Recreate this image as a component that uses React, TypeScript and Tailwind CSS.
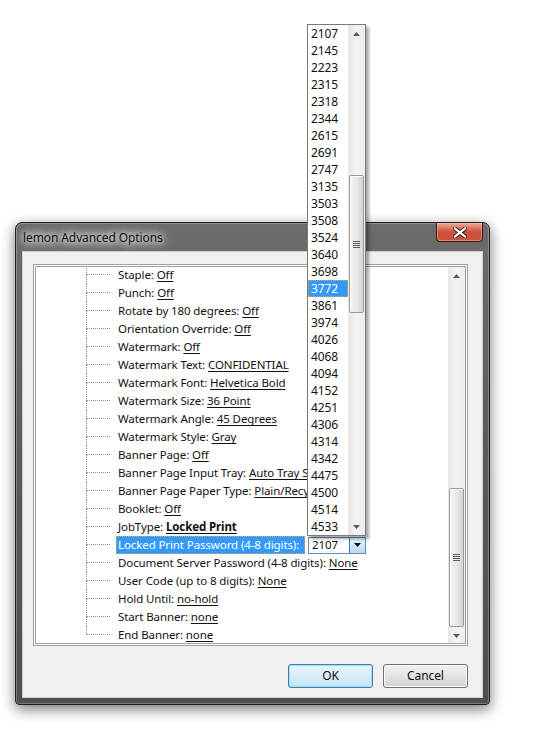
import React from "react";

type Row = { label: string; value?: string; bold?: boolean; combo?: boolean };

const ROWS: Row[] = [
  { label: "Staple", value: "Off" },
  { label: "Punch", value: "Off" },
  { label: "Rotate by 180 degrees", value: "Off" },
  { label: "Orientation Override", value: "Off" },
  { label: "Watermark", value: "Off" },
  { label: "Watermark Text", value: "CONFIDENTIAL" },
  { label: "Watermark Font", value: "Helvetica Bold" },
  { label: "Watermark Size", value: "36 Point" },
  { label: "Watermark Angle", value: "45 Degrees" },
  { label: "Watermark Style", value: "Gray" },
  { label: "Banner Page", value: "Off" },
  { label: "Banner Page Input Tray", value: "Auto Tray Select" },
  { label: "Banner Page Paper Type", value: "Plain/Recycled" },
  { label: "Booklet", value: "Off" },
  { label: "JobType", value: "Locked Print", bold: true },
  { label: "Locked Print Password (4-8 digits)", combo: true },
  { label: "Document Server Password (4-8 digits)", value: "None" },
  { label: "User Code (up to 8 digits)", value: "None" },
  { label: "Hold Until", value: "no-hold" },
  { label: "Start Banner", value: "none" },
  { label: "End Banner", value: "none" },
];

const PASSWORDS = [
  "2107", "2145", "2223", "2315", "2318", "2344", "2615", "2691", "2747", "3135",
  "3503", "3508", "3524", "3640", "3698", "3772", "3861", "3974", "4026", "4068",
  "4094", "4152", "4251", "4306", "4314", "4342", "4475", "4500", "4514", "4533",
];

function Arrow({ down }: { down?: boolean }) {
  return (
    <svg width="7" height="4" viewBox="0 0 7 4">
      <path d={down ? "M0 0H7L3.5 4Z" : "M0 4H7L3.5 0Z"} fill="#5a5a5a" />
    </svg>
  );
}

// vertical win7 scrollbar, thumb placed with spacers
function ScrollBar({ before, thumb }: { before: number; thumb: number }) {
  return (
    <div className="flex h-full w-[17px] shrink-0 flex-col bg-gradient-to-r from-[#e6e6e6] via-[#f3f3f3] to-[#ececec]">
      <div className="flex h-[17px] shrink-0 items-center justify-center">
        <Arrow />
      </div>
      <div className="shrink-0" style={{ height: before }} />
      <div
        className="mx-auto flex w-[15px] shrink-0 items-center justify-center rounded-[2px] border border-[#9a9a9a] bg-gradient-to-r from-[#f4f4f4] via-[#e9e9e9] to-[#d4d4d4] shadow-[inset_1px_1px_0_#fff]"
        style={{ height: thumb }}
      >
        <div className="flex flex-col gap-[1px]">
          <div className="h-px w-[7px] bg-[#5c5c5c]" />
          <div className="h-px w-[7px] bg-[#5c5c5c]" />
          <div className="h-px w-[7px] bg-[#5c5c5c]" />
          <div className="h-px w-[7px] bg-[#5c5c5c]" />
        </div>
      </div>
      <div className="flex-1" />
      <div className="flex h-[17px] shrink-0 items-center justify-center">
        <Arrow down />
      </div>
    </div>
  );
}

function TreeRow({ row, last, underList }: { row: Row; last: boolean; underList: boolean }) {
  return (
    <div className="flex h-[18px] shrink-0 items-stretch">
      <div className="w-[50px] shrink-0" />
      <div className="flex w-[24px] shrink-0 flex-col">
        <div className="h-[9px] border-b border-l border-dotted border-[#8f8f8f]" />
        <div className={`flex-1 ${last ? "" : "border-l border-dotted border-[#8f8f8f]"}`} />
      </div>
      {row.combo ? (
        <div className="ml-[6px] flex items-center">
          <span className="flex h-[18px] w-[189px] items-center whitespace-nowrap border border-dotted border-[#e2a35a] bg-[#3399ff] px-[1px] text-white">
            {row.label}:
          </span>
          <div className="ml-[3px] flex h-[17px] w-[58px] border border-[#5b8fc4] bg-white">
            <span className="flex flex-1 items-center pl-[3px] leading-none">2107</span>
            <div className="flex w-[16px] items-center justify-center border-l border-[#3c7fb1] bg-gradient-to-b from-[#e5f4fc] to-[#b9ddf2]">
              <svg width="7" height="4" viewBox="0 0 7 4">
                <path d="M0 0H7L3.5 4Z" fill="#111" />
              </svg>
            </div>
          </div>
        </div>
      ) : (
        // rows behind the open list get cut where the list starts
        <span
          className={`ml-[6px] flex items-center whitespace-nowrap px-[2px] ${
            underList ? "max-w-[191px] overflow-hidden" : ""
          }`}
        >
          {row.label}:&nbsp;
          <span className={`underline underline-offset-2 ${row.bold ? "font-bold" : ""}`}>{row.value}</span>
        </span>
      )}
    </div>
  );
}

export default function App() {
  return (
    <div className="relative h-[729px] w-[539px] overflow-hidden bg-white font-['Noto_Sans','Liberation_Sans',sans-serif] text-[11.5px] tracking-[-0.1px] text-[#111]">
      {/* dialog window */}
      <div className="ml-[15px] mt-[222px] flex h-[483px] w-[475px] flex-col rounded-t-[7px] rounded-b-[4px] border border-[#1e1e1e] bg-gradient-to-b from-[#6c6c6c] via-[#5a5a5a] to-[#4e4e4e] shadow-[0_4px_14px_rgba(0,0,0,0.55),inset_0_0_0_1px_rgba(255,255,255,0.25)]">
        {/* title bar */}
        <div className="flex h-[28px] shrink-0 items-start">
          <span className="ml-[7px] mt-[6px] text-[12px] text-[#111] [text-shadow:0_0_6px_#fff,0_0_10px_#fff,0_0_14px_#fff]">
            lemon Advanced Options
          </span>
          <div className="ml-auto mr-[6px] flex h-[19px] w-[47px] items-center justify-center rounded-b-[4px] border border-t-0 border-[#3b1712] bg-gradient-to-b from-[#e8a899] via-[#d0513c] to-[#c9523c] shadow-[inset_0_0_0_1px_rgba(255,200,190,0.45)]">
            <svg width="14" height="11" viewBox="0 0 14 11">
              <path d="M2 1.5L12 9.5M12 1.5L2 9.5" stroke="#3a2a28" strokeWidth="4.2" strokeLinecap="square" />
              <path d="M2 1.5L12 9.5M12 1.5L2 9.5" stroke="#fff" strokeWidth="2.2" strokeLinecap="square" />
            </svg>
          </div>
        </div>

        {/* client area */}
        <div className="mx-[6px] flex h-[447px] shrink-0 flex-col border border-[#cfcfcf] bg-[#f0f0f0]">
          {/* tree panel */}
          <div className="ml-[10px] mr-[14px] mt-[12px] h-[382px] border border-[#a0a0a0] bg-white p-px">
            <div className="flex h-full border border-[#a0a0a0]">
              <div className="flex flex-1 flex-col overflow-hidden">
                <div className="-mt-[1px] flex flex-col">
                  {ROWS.map((row, i) => (
                    <TreeRow key={row.label} row={row} last={i === ROWS.length - 1} underList={i < 15} />
                  ))}
                </div>
              </div>
              <ScrollBar before={204} thumb={139} />
            </div>
          </div>

          {/* buttons */}
          <div className="mr-[14px] mt-[18px] flex justify-end gap-[10px] text-[12px]">
            <button className="flex h-[24px] w-[85px] items-center justify-center rounded-[3px] border border-[#3c7fb1] bg-gradient-to-b from-[#e9f5fc] to-[#c6e5f5] shadow-[inset_0_0_0_1px_#a7d8f3]">
              OK
            </button>
            <button className="flex h-[24px] w-[85px] items-center justify-center rounded-[3px] border border-[#707070] bg-gradient-to-b from-[#f2f2f2] to-[#d4d4d4] shadow-[inset_0_0_0_1px_#fcfcfc]">
              Cancel
            </button>
          </div>
        </div>
      </div>

      {/* open combo list, drawn over the dialog */}
      <div className="absolute left-[307px] top-[24px] flex h-[512px] w-[59px] border border-[#7a7a7a] bg-white shadow-[3px_3px_3px_rgba(0,0,0,0.35)]">
        <div className="flex w-[41px] flex-col text-[12px]">
          {PASSWORDS.map((p) => (
            <div
              key={p}
              className={`flex h-[17px] shrink-0 items-center pl-[2px] ${
                p === "3772" ? "border border-dotted border-[#e2a35a] bg-[#3399ff] text-white" : "border border-transparent"
              }`}
            >
              {p}
            </div>
          ))}
        </div>
        <ScrollBar before={133} thumb={138} />
      </div>
    </div>
  );
}
